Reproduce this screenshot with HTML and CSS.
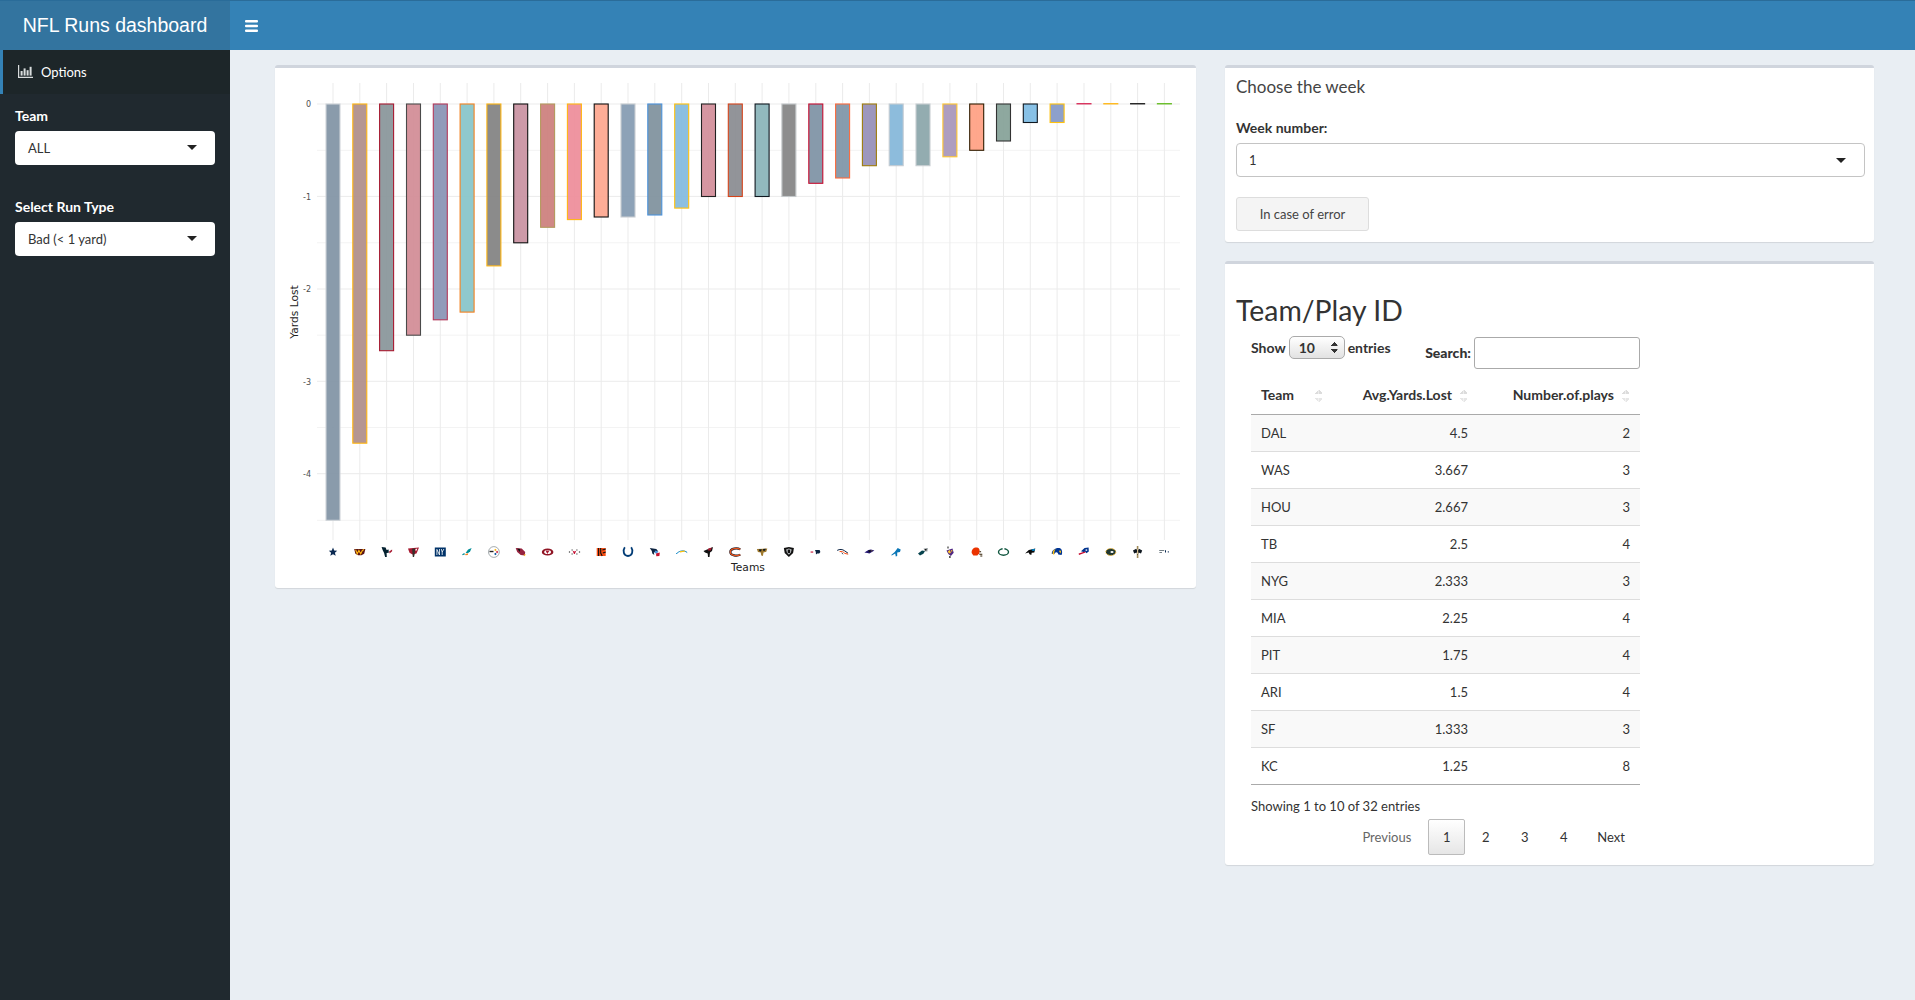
FILE: index.html
```html
<!DOCTYPE html>
<html>
<head>
<meta http-equiv="content-type" content="text/html; charset=UTF-8" />
<title>NFL Runs dashboard</title>
<link rel="stylesheet" href="styles.css">
</head>

<body>

<header class="topbar">
    <div class="logo">NFL Runs dashboard</div>
    <div class="nav">
        <svg class="bars" width="13" height="12" viewBox="0 0 13 12"><rect y="0" width="13" height="2.4" rx="1"/><rect y="4.8" width="13" height="2.4" rx="1"/><rect y="9.6" width="13" height="2.4" rx="1"/></svg>
    </div>
</header>

<div class="wrap">

<aside class="sidebar">
    <div class="menu-item">
        <svg width="15" height="13" viewBox="0 0 15 13" fill="#d8dcdd"><path d="M0 0h1.2v11.8H15V13H0z"/><rect x="2.6" y="6" width="2" height="4.6"/><rect x="5.6" y="3.4" width="2" height="7.2"/><rect x="8.6" y="5.2" width="2" height="5.4"/><rect x="11.6" y="1.8" width="2" height="8.8"/></svg>
        <span>Options</span>
    </div>
    <div class="side-form">
        <label class="side-label">Team</label>
        <div class="pick">ALL</div>
        <label class="side-label second">Select Run Type</label>
        <div class="pick">Bad (&lt; 1 yard)</div>
    </div>
</aside>

<main class="content">

<section class="box chart-box">
<svg class="chart" width="921" height="520" viewBox="275 68 921 520">
    <!-- horizontal grid -->
    <g stroke="#f3f3f3" stroke-width="1">
        <path d="M317 150.3H1180M317 242.8H1180M317 335.2H1180M317 427.5H1180M317 520.3H1180"/>
    </g>
    <g stroke="#ebebeb" stroke-width="1">
        <path d="M317 104H1180M317 196.4H1180M317 289H1180M317 381.3H1180M317 473.7H1180"/>
    </g>
    <!-- vertical grid -->
    <g stroke="#ebebeb" stroke-width="1">
        <path d="M333 83V540M359.8 83V540M386.6 83V540M413.5 83V540M440.3 83V540M467.1 83V540M493.9 83V540M520.7 83V540M547.6 83V540M574.4 83V540M601.2 83V540M628 83V540M654.8 83V540M681.7 83V540M708.5 83V540M735.3 83V540M762.1 83V540M788.9 83V540M815.8 83V540M842.6 83V540M869.4 83V540M896.2 83V540M923 83V540M949.9 83V540M976.7 83V540M1003.5 83V540M1030.3 83V540M1057.1 83V540M1084 83V540M1110.8 83V540M1137.6 83V540M1164.4 83V540"/>
    </g>
    <!-- bars, one per team -->
    <g stroke-width="1.1" fill-opacity="0.94">
        <rect x="326" y="104" width="14" height="416.3" fill="#8395a6" stroke="#cfd4d9"/>
        <rect x="352.8" y="104" width="14" height="339.2" fill="#b08f8b" stroke="#ffb612"/>
        <rect x="379.6" y="104" width="14" height="246.7" fill="#8a979b" stroke="#a71930"/>
        <rect x="406.5" y="104" width="14" height="231.2" fill="#d28d97" stroke="#4a4a4a"/>
        <rect x="433.3" y="104" width="14" height="215.8" fill="#8a95b6" stroke="#b3385a"/>
        <rect x="460.1" y="104" width="14" height="208.1" fill="#88c6ca" stroke="#f58220"/>
        <rect x="486.9" y="104" width="14" height="161.9" fill="#848484" stroke="#ffb612"/>
        <rect x="513.7" y="104" width="14" height="138.8" fill="#ca94a3" stroke="#111111"/>
        <rect x="540.6" y="104" width="14" height="123.3" fill="#cd817e" stroke="#b3995d"/>
        <rect x="567.4" y="104" width="14" height="115.6" fill="#ee8e9b" stroke="#ffb612"/>
        <rect x="594.2" y="104" width="14" height="113" fill="#fda891" stroke="#111111"/>
        <rect x="621" y="104" width="14" height="113" fill="#869cb2" stroke="#c8cdd1"/>
        <rect x="647.8" y="104" width="14" height="111" fill="#81939e" stroke="#4b92db"/>
        <rect x="674.7" y="104" width="14" height="104.1" fill="#85bbdf" stroke="#ffc20e"/>
        <rect x="701.5" y="104" width="14" height="92.5" fill="#d28f9b" stroke="#222222"/>
        <rect x="728.3" y="104" width="14" height="92.5" fill="#8b8d93" stroke="#d5431a"/>
        <rect x="755.1" y="104" width="14" height="92.5" fill="#8bb5ba" stroke="#101820"/>
        <rect x="781.9" y="104" width="14" height="92.5" fill="#868686" stroke="#c4c8ca"/>
        <rect x="808.8" y="104" width="14" height="79.3" fill="#8094a6" stroke="#c60c30"/>
        <rect x="835.6" y="104" width="14" height="74" fill="#8196a8" stroke="#fb6a3c"/>
        <rect x="862.4" y="104" width="14" height="61.7" fill="#9791b9" stroke="#9e7c0c"/>
        <rect x="889.2" y="104" width="14" height="61.7" fill="#86b8da" stroke="#c5ccd2"/>
        <rect x="916" y="104" width="14" height="61.7" fill="#8ca7ab" stroke="#c8ced2"/>
        <rect x="942.9" y="104" width="14" height="52.8" fill="#a997bb" stroke="#ffc62f"/>
        <rect x="969.7" y="104" width="14" height="46.3" fill="#ffa285" stroke="#311d00"/>
        <rect x="996.5" y="104" width="14" height="37" fill="#87a399" stroke="#333333"/>
        <rect x="1023.3" y="104" width="14" height="18.5" fill="#81bde4" stroke="#101820"/>
        <rect x="1050.1" y="104" width="14" height="18.5" fill="#869ac8" stroke="#ffc20e"/>
        <rect x="1077" y="103.6" width="14" height="0.3" fill="#d8315b" stroke="#d8315b"/>
        <rect x="1103.8" y="103.6" width="14" height="0.3" fill="#ffb81c" stroke="#ffb81c"/>
        <rect x="1130.6" y="103.6" width="14" height="0.3" fill="#222222" stroke="#222222"/>
        <rect x="1157.4" y="103.6" width="14" height="0.3" fill="#69be28" stroke="#69be28"/>
    </g>
    <!-- axis text -->
    <g class="tick" text-anchor="end">
        <text x="311" y="107">0</text>
        <text x="311" y="199.5">-1</text>
        <text x="311" y="292">-2</text>
        <text x="311" y="384.5">-3</text>
        <text x="311" y="477">-4</text>
    </g>
    <text class="axis" text-anchor="middle" transform="translate(298 312) rotate(-90)">Yards Lost</text>
    <text class="axis" text-anchor="middle" x="748" y="571">Teams</text>

    <!-- team logos -->
    <g transform="translate(333 552)"><path fill="#0b2a52" d="M0-4.4 1.2-1.4 4.2-1.2 1.9.8 2.7 3.8 0 2.2-2.7 3.8-1.9.8-4.2-1.2-1.2-1.4z"/></g>
    <g transform="translate(359.8 552)"><path fill="#5a1414" d="M-5.6-3H5.6L4.4 1.8 1.6 3.2h-3.2L-4.4 1.8z"/><path fill="none" stroke="#ffb612" stroke-width="1.1" d="M-4.2-2.4-2.6 1.8-.9-1.6 .9 1.8 2.6-1.6 4.2-2.4"/></g>
    <g transform="translate(386.6 552)"><path fill="#03202f" d="M-5-5-1-4.5 0-2 2-2.5 2.2.8 0 1 .2 5-1.5 5-2.5 1-4-2z"/><path fill="#a71930" d="M2.5-.5 5.5-2.5 5.5-.8 3 1.5z"/></g>
    <g transform="translate(413.5 552)"><path fill="#a71930" d="M-5.5-3.5 5.5-4.5 3 1.4-1 2.4-4 .8z"/><path fill="#34302b" d="M-1.4-3.2 1.6-3.4 1.2 2 .5 5-.7 5z"/><path fill="#fff" d="M2-3 3.8-3.4 3.2-1.5 2-1.2z"/></g>
    <g transform="translate(440.3 552)"><rect x="-5.5" y="-4.5" width="11" height="9" fill="#013369"/><path fill="none" stroke="#fff" stroke-width=".8" d="M-3.4 3V-2.6L-.8 3V-3M1 -3 1.9 0 3.6-3M1.9 0V3"/></g>
    <g transform="translate(467.1 552)"><path fill="#008e97" d="M-1.5 1 1-2.5 4.5-4 3 -.5 1 1z"/><path fill="#f58220" d="M-2 2 1 1.2 .8 3-1.5 3.2z"/><path fill="#008e97" d="M-5 2.5-3 1-2 2.2-4.5 3.2z"/></g>
    <g transform="translate(493.9 552)"><circle r="5.4" fill="#fff" stroke="#a5acaf" stroke-width="1"/><path fill="#222" d="M-4.4-1.2H-.4V.2H-4.4z"/><path fill="#ffb612" d="M1.5-3.2 2.8-2 1.5-.8.2-2z"/><path fill="#c60c30" d="M3.2-1.2 4.3 0 3.2 1.2 2 0z"/><path fill="#00539b" d="M1.5.8 2.8 2 1.5 3.2.2 2z"/></g>
    <g transform="translate(520.7 552)"><path fill="#97233f" d="M-5-4 1-3.5 4.5 0 4 3.5 0 3-3.5 0z"/><path fill="#111" d="M-3.5-3.5-.5-3-1 0z"/><path fill="#ffb612" d="M3 2.4 5.4 2.6 3.6 4.2z"/></g>
    <g transform="translate(547.6 552)"><ellipse rx="5.8" ry="3.6" fill="#8f1524"/><ellipse rx="3.4" ry="2.1" fill="#fff"/><path fill="#a71930" d="M-2-1.6 2-1.6 .8 .2-.2 2-1.2 .2z"/></g>
    <g transform="translate(574.4 552)"><path fill="#111" d="M-5.5-.5h1.2v1h-1.2zM-2.8-2.5h1v1h-1zM-2.8 1.5h1v1h-1zM2-2.5h1v1H2zM2 1.5h1v1H2zM4.5-.5h1.2v1H4.5z"/><path fill="#c60c30" d="M-1.8-1.2 0-.6 1.8-1.2 .4 2h-.8z"/></g>
    <g transform="translate(601.2 552)"><rect x="-4.5" y="-4" width="9" height="8" fill="#fb4f14"/><path fill="none" stroke="#111" stroke-width="1.1" d="M-2.6-4V4M-.5-4-.5 1 1 4M1.2-2 4.5-3M1.6 1 4.5 0"/></g>
    <g transform="translate(628 552)"><path fill="none" stroke="#003b75" stroke-width="1.8" d="M-3.2-4.8C-5.5-1.5-4.5 4 0 4S5.5-1.5 3.2-4.8"/></g>
    <g transform="translate(654.8 552)"><path fill="#0c2340" d="M-5-4 1.5-3 3.5-.5-1 .5-.5 3-2.5 1.5-3-1z"/><path fill="#4b92db" d="M0-1.4 3.4-.8 2.4 1.6 0 1.2z"/><path fill="#c8102e" d="M1.2 1.4 5 .6 4.6 4 1.5 4.2z"/></g>
    <g transform="translate(681.7 552)"><path fill="none" stroke="#0080c6" stroke-width="1" d="M-5.5 2C-3-1 2-2.5 5.5 .5"/><path fill="#ffc20e" d="M-2-.8 3-1.6 3.6-.4-1.6.4z"/></g>
    <g transform="translate(708.5 552)"><path fill="#111" d="M-5-1 4.5-5 3.5-1 1.5.5 1 5-.5 5-.8 1.5-3.5.5z"/><path fill="#a71930" d="M-.5-3.2 3.4-4.4 2.2-1.6-.4-1.4z"/></g>
    <g transform="translate(735.3 552)"><path fill="none" stroke="#0b162a" stroke-width="2.1" d="M5-2.6C2-4.4-5-3.8-5 0S2 4.4 5 2.6"/><path fill="none" stroke="#e8541c" stroke-width="1.3" d="M5-2.6C2-4.4-5-3.8-5 0S2 4.4 5 2.6"/></g>
    <g transform="translate(762.1 552)"><path fill="#9f792c" d="M-5.2-3 5.2-3.4 4.2-.2 1.4.4 .8 4-.8 3.6-1.4.4-4.2 0z"/><path fill="#101820" d="M-3.2-2.6-.4-2.8-1-.6-2.8-.8zM1-3 3.8-3.2 2.8-1.2 1-1.2z"/></g>
    <g transform="translate(788.9 552)"><path fill="#111" d="M-5-4 0-5 5-4 4.2 1 0 5-4.2 1z"/><path fill="#b9bdbf" d="M-2.8-2.6 0-3.6 2.8-2.6 2 .4 0 2.8-2 .4z"/><path fill="#111" d="M-1.2-2.4H1.2V1H-1.2z"/></g>
    <g transform="translate(815.8 552)"><path fill="#c60c30" d="M-5.2-.5h2.6V.6h-2.6z"/><path fill="#0c2340" d="M-.8-2 3.8-2 4.6 0 3.4 1.6 1.4 1.4 .2 2.4 0 0z"/></g>
    <g transform="translate(842.6 552)"><path fill="none" stroke="#0a2343" stroke-width="1" d="M-5.4-1.6C-3-3 0-2.8 2-1.2L5.4 1.2"/><path fill="none" stroke="#fb4f14" stroke-width="1" d="M-3-.4C-1-1 1 0 2.2 1.4L5.6 2.2"/><path fill="none" stroke="#0a2343" stroke-width=".8" d="M-1 .8 .6 2.2"/></g>
    <g transform="translate(869.4 552)"><path fill="#241773" d="M-5 .6-1-2 1.5-2.4 5-1.4 2.5 0 0 1.6-2 1z"/><path fill="#111" d="M-1-1.6 1-2 1.4-.4-.6.4z"/><path fill="#9e7c0c" d="M1.6-1.4 3.4-1.2 2.2-.4z"/></g>
    <g transform="translate(896.2 552)"><path fill="#0a76b6" d="M-5 3-1.5 0 1.5-4 4.5-2.4 3.8 0 1 .4 1 4-.4 4.6-1 1.6-4.4 3.6z"/></g>
    <g transform="translate(923 552)"><path fill="#06424d" d="M-5 1.5-1-1.5 2-1 .4 1.8-3 3.5z"/><path fill="#a5acaf" d="M.5-3.4 5-4 4.4-.4 2-.6z"/><path fill="#111" d="M1.6-2.8 3.6-3.2 3.4-1.4 2-1.4z"/></g>
    <g transform="translate(949.9 552)"><path fill="#4f2683" d="M-3.4-1.6 2.6-3.4 3.8 .8 1 4 -1.6 2z"/><path fill="#ffc62f" d="M-2.2-.8 0-2 1 1-1 1.5zM1-2 2.6-1.8 2 .6z"/><path fill="#111" d="M-2.4-5.6h1v2h-1zM-.6 4h1.2v2H-.6z"/></g>
    <g transform="translate(976.7 552)"><path fill="#eb3300" d="M-5 1C-5.6-3-2.2-5 .6-4.4 3-3.8 3.4-1.2 2.6 1.2L.6 3.4-3.4 3.4z"/><path fill="#311d00" d="M2.8-.8h1.6v1H2.8zM2.6 1.8h3v1h-3zM3.6 3.4h2v1h-2z"/></g>
    <g transform="translate(1003.5 552)"><ellipse rx="5" ry="3.2" fill="#fff" stroke="#125740" stroke-width="1.4"/><path fill="#fff" d="M-.9-4H.9V-2H-.9z"/></g>
    <g transform="translate(1030.3 552)"><path fill="#0a0a0a" d="M-5.2 1.5-1.5-2 5-3.4 4 .4 1.4 .8 1 3 -.8 2.2-1.6.6z"/><path fill="#0085ca" d="M1-2.6 4.8-3.2 4.2-1 1.8-1.2z"/></g>
    <g transform="translate(1057.1 552)"><path fill="#003594" d="M-5.4 1.8C-5.4-2-1.4-4.6 2.4-4 5.2-3.4 5.6 1 4.4 3L1.2 2.4C.6-.6-1.6-.4-2.8 2z"/><path fill="#ffc20e" d="M-4.4 1.6C-4.6-.8-3.4-2.4-1.6-3-2.8-1-2.8.6-3 3.2zM2.6-1.8 4-1 3.4 1.6 2-.4z"/></g>
    <g transform="translate(1084 552)"><path fill="#00338d" d="M-3-.8 .6-4 4.6-4.4 4.8-.6 2.4 1.2 1.4-.2-.6 0z"/><path fill="#c60c30" d="M-5.4 1.4 1-.6 1.6.4-5 3z"/><path fill="#fff" d="M1.6-2.6h1.6v1.4H1.6z"/></g>
    <g transform="translate(1110.8 552)"><ellipse rx="5" ry="3.4" fill="#203731" stroke="#ffb81c" stroke-width=".9" stroke-dasharray="1.6 1"/><ellipse cx="1.2" rx="1.6" ry="1.1" fill="#fff"/></g>
    <g transform="translate(1137.6 552)"><path fill="#9f8958" d="M-.8-6H.8V6H-.8z"/><path fill="#101820" d="M-4.6-1.6-1.4-3.2 0-1 1.4-3.2 4.6-1.6 3.4 1.4 1 .6 0 3-1 .6-3.4 1.4z"/><path fill="#d3bc8d" d="M-.6-3h1.2v5H-.6z"/></g>
    <g transform="translate(1164.4 552)"><path fill="#45555f" d="M-5.2-1.8H-.2V-.9H-5.2zM-5-.1H-2.4V.7H-5z"/><path fill="#0b2a52" d="M.6-1.8h1v2.4h-1zM3.4-.8h1v1.4h-1z"/></g>
</svg>
</section>

<div class="side-col">

<section class="box week-box">
    <h3 class="box-title">Choose the week</h3>
    <label class="field-label">Week number:</label>
    <div class="pick bordered">1</div>
    <button class="btn">In case of error</button>
</section>

<section class="box table-box">
    <h2 class="table-title">Team/Play ID</h2>
    <div class="dt">
        <div class="dt-top">
            <div class="dt-length">
                <b>Show</b>
                <span class="small-select"><b>10</b><i class="updown"></i></span>
                <b>entries</b>
            </div>
            <div class="dt-search">
                <b>Search:</b>
                <input type="text">
            </div>
        </div>
        <table>
            <thead>
                <tr>
                    <th class="col-team"><span class="head">Team</span><i class="sort"></i></th>
                    <th class="col-avg"><span class="head">Avg.Yards.Lost</span><i class="sort"></i></th>
                    <th class="col-num"><span class="head">Number.of.plays</span><i class="sort"></i></th>
                </tr>
            </thead>
            <tbody>
                <tr><td>DAL</td><td>4.5</td><td>2</td></tr>
                <tr><td>WAS</td><td>3.667</td><td>3</td></tr>
                <tr><td>HOU</td><td>2.667</td><td>3</td></tr>
                <tr><td>TB</td><td>2.5</td><td>4</td></tr>
                <tr><td>NYG</td><td>2.333</td><td>3</td></tr>
                <tr><td>MIA</td><td>2.25</td><td>4</td></tr>
                <tr><td>PIT</td><td>1.75</td><td>4</td></tr>
                <tr><td>ARI</td><td>1.5</td><td>4</td></tr>
                <tr><td>SF</td><td>1.333</td><td>3</td></tr>
                <tr><td>KC</td><td>1.25</td><td>8</td></tr>
            </tbody>
        </table>
        <div class="dt-info">Showing 1 to 10 of 32 entries</div>
        <div class="pager">
            <a class="page off">Previous</a>
            <a class="page num current">1</a>
            <a class="page num">2</a>
            <a class="page num">3</a>
            <a class="page num">4</a>
            <a class="page">Next</a>
        </div>
    </div>
</section>

</div>

</main>

</div>

</body>

</html>
```

FILE: styles.css
```css
* {
margin: 0;
padding: 0;
box-sizing: border-box;
}

html,body{
height: 100%;
overflow: hidden;
background-color: #e9eef3;
font-family: Lato, "Noto Sans", sans-serif;
font-size: 13px;
color: #333;
}

b,label,th{
font-size: 14px;
}

/* top bar */
.topbar{
display: flex;
height: 50px;
background-color: #3482b6;
border-top: 1px solid #2a6c99;
}

.logo{
width: 230px;
background-color: #33749f;
color: #fff;
font-family: "Liberation Sans", sans-serif;
font-size: 19.5px;
line-height: 48px;
text-align: center;
}

.nav{
display: flex;
align-items: center;
padding-left: 15px;
}

.bars{
fill: #fff;
}

/* sidebar */
.wrap{
display: flex;
height: 950px;
}

.sidebar{
width: 230px;
flex-shrink: 0;
background-color: #20292f;
}

.menu-item{
display: flex;
align-items: center;
gap: 8px;
height: 44px;
padding: 0 0 1px 15px;
background-color: #1d2629;
border-left: 3px solid #3482b6;
color: #fff;
}

.side-form{
padding: 12px 15px 0;
}

.side-label{
display: block;
height: 20px;
line-height: 20px;
margin-bottom: 5px;
font-weight: 700;
color: #fff;
}

.side-label.second{
margin-top: 32px;
}

.pick{
position: relative;
height: 34px;
line-height: 34px;
padding-left: 13px;
background-color: #fff;
border-radius: 4px;
color: #333;
}

.pick:after{
content: "";
position: absolute;
right: 18px;
top: 14px;
border-style: solid;
border-width: 5px 5px 0;
border-color: #222 transparent transparent;
}

.pick.bordered{
border: 1px solid #c4c4c4;
line-height: 32px;
padding-left: 12px;
}

/* main area */
.content{
display: flex;
align-items: flex-start;
gap: 29px;
padding: 15px 0 0 45px;
}

.box{
background-color: #fff;
border-top: 3px solid #d0d5dd;
border-radius: 3px;
box-shadow: 0 1px 1px rgba(0,0,0,0.1);
}

.chart-box{
width: 921px;
height: 523px;
}

.chart{
display: block;
}

.tick text{
font-family: "DejaVu Sans", sans-serif;
font-size: 8px;
fill: #4d4d4d;
}

.axis{
font-family: "DejaVu Sans", sans-serif;
font-size: 10.7px;
fill: #222;
}

.side-col{
display: flex;
flex-direction: column;
gap: 19px;
width: 649px;
flex-shrink: 0;
}

/* week box */
.week-box{
height: 177px;
padding: 9px 9px 0 11px;
}

.box-title{
font-size: 17px;
font-weight: 400;
line-height: 20px;
color: #444;
}

.field-label{
display: block;
margin-top: 21px;
margin-bottom: 5px;
height: 20px;
line-height: 20px;
font-weight: 700;
}

.btn{
display: block;
width: 133px;
height: 34px;
margin-top: 20px;
background-color: #f4f4f4;
border: 1px solid #ddd;
border-radius: 3px;
font-family: inherit;
font-size: 13px;
color: #444;
}

/* table box */
.table-box{
height: 604px;
padding: 30px 9px 0 11px;
}

.table-title{
font-size: 28.4px;
font-weight: 400;
line-height: 33px;
color: #333;
}

.dt{
width: 389px;
margin-top: 10px;
margin-left: 15px;
}

.dt-top{
display: flex;
justify-content: space-between;
height: 32px;
}

.dt-length{
display: flex;
align-items: center;
height: 21px;
gap: 3px;
}

.small-select{
display: flex;
align-items: center;
justify-content: space-between;
width: 56px;
height: 23px;
padding: 0 6px 0 9px;
border: 1px solid #aaa;
border-radius: 5px;
background: linear-gradient(#fff, #e2e2e2);
}

.updown{
display: block;
width: 7px;
height: 13px;
background:
 linear-gradient(135deg, transparent 50%, #333 50%) 0 0 / 3.5px 5px no-repeat,
 linear-gradient(225deg, transparent 50%, #333 50%) 3.5px 0 / 3.5px 5px no-repeat,
 linear-gradient(45deg, transparent 50%, #333 50%) 0 8px / 3.5px 5px no-repeat,
 linear-gradient(315deg, transparent 50%, #333 50%) 3.5px 8px / 3.5px 5px no-repeat;
}

.dt-search{
display: flex;
align-items: center;
gap: 3px;
height: 32px;
padding-bottom: 1px;
font-weight: 700;
}

.dt-search input{
width: 166px;
height: 32px;
margin-bottom: -1px;
border: 1px solid #aaa;
border-radius: 3px;
background-color: #fff;
}

table{
width: 389px;
margin-top: 6px;
border-collapse: collapse;
table-layout: fixed;
}

th{
height: 39px;
padding: 0 11px 0 10px;
border-bottom: 1px solid #aaa;
font-weight: 700;
white-space: nowrap;
}

.col-team{
width: 81px;
text-align: left;
}

.col-avg{
width: 146px;
text-align: right;
}

.col-num{
width: 162px;
text-align: right;
}

.col-team .head{
display: inline-block;
width: 46px;
}

.sort{
display: inline-block;
width: 7px;
height: 14px;
margin-left: 8px;
vertical-align: -3px;
background:
 linear-gradient(135deg, transparent 50%, #dcdcdc 50%) 0 0 / 3.5px 5px no-repeat,
 linear-gradient(225deg, transparent 50%, #dcdcdc 50%) 3.5px 0 / 3.5px 5px no-repeat,
 linear-gradient(45deg, transparent 50%, #e6e6e6 50%) 0 9px / 3.5px 5px no-repeat,
 linear-gradient(315deg, transparent 50%, #e6e6e6 50%) 3.5px 9px / 3.5px 5px no-repeat;
}

td{
height: 37px;
padding: 0 10px;
border-bottom: 1px solid #ddd;
text-align: right;
}

td:first-child{
text-align: left;
}

tbody tr:nth-child(odd){
background-color: #f9f9f9;
}

tbody tr:last-child td{
border-bottom-color: #aaa;
}

.dt-info{
height: 20px;
margin-top: 12px;
line-height: 19px;
}

.pager{
display: flex;
justify-content: flex-end;
gap: 2px;
margin-top: 2px;
}

.page{
display: block;
height: 36px;
line-height: 36px;
padding: 0 15px;
color: #333;
}

.page:last-child{
padding-left: 13px;
}

.page.off{
color: #666;
}

.page.num{
width: 37px;
padding: 0;
text-align: center;
}

.page.current{
line-height: 34px;
border: 1px solid #bbb;
border-radius: 2px;
background: linear-gradient(#fff, #e6e6e6);
}
```
